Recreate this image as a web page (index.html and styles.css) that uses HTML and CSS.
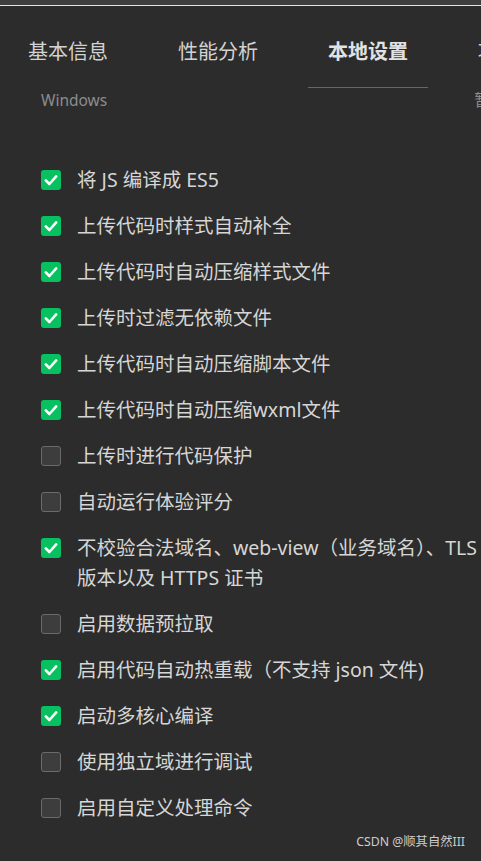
FILE: index.html
```html
<!DOCTYPE html>
<html lang="zh-CN">
<head>
  <meta charset="UTF-8" />
  <meta name="viewport" content="width=device-width, initial-scale=1.0"/>
  <title>详情 - 本地设置</title>
  <link rel="stylesheet" href="styles.css">
</head>
<body>
  <div class="topbar"></div>

  <div class="tabs">
    <div class="tab">基本信息</div>
    <div class="tab">性能分析</div>
    <div class="tab active">本地设置</div>
    <div class="tab">项目配置</div>
  </div>

  <div class="subrow">
    <span class="sub">Windows</span>
    <span class="sub sub-right">暂无</span>
  </div>

  <ul class="options">
    <li class="option"><span class="box checked"></span><span class="label">将 JS 编译成 ES5</span></li>
    <li class="option"><span class="box checked"></span><span class="label">上传代码时样式自动补全</span></li>
    <li class="option"><span class="box checked"></span><span class="label">上传代码时自动压缩样式文件</span></li>
    <li class="option"><span class="box checked"></span><span class="label">上传时过滤无依赖文件</span></li>
    <li class="option"><span class="box checked"></span><span class="label">上传代码时自动压缩脚本文件</span></li>
    <li class="option"><span class="box checked"></span><span class="label">上传代码时自动压缩wxml文件</span></li>
    <li class="option"><span class="box"></span><span class="label">上传时进行代码保护</span></li>
    <li class="option"><span class="box"></span><span class="label">自动运行体验评分</span></li>
    <li class="option"><span class="box checked"></span><span class="label">不校验合法域名、web-view（业务域名）、TLS<br>版本以及 HTTPS 证书</span></li>
    <li class="option"><span class="box"></span><span class="label">启用数据预拉取</span></li>
    <li class="option"><span class="box checked"></span><span class="label">启用代码自动热重载（不支持 json 文件)</span></li>
    <li class="option"><span class="box checked"></span><span class="label">启动多核心编译</span></li>
    <li class="option"><span class="box"></span><span class="label">使用独立域进行调试</span></li>
    <li class="option"><span class="box"></span><span class="label">启用自定义处理命令</span></li>
  </ul>

  <div class="watermark">CSDN @顺其自然III</div>

  <script>
    // draw the tick inside every checked box
    document.querySelectorAll(".box.checked").forEach(function (box) {
      box.innerHTML =
        '<svg width="20" height="20" viewBox="0 0 20 20">' +
        '<polyline points="4.8,10.4 8.4,14 15.2,6.4" fill="none" stroke="#fff" stroke-width="2.6" stroke-linecap="round" stroke-linejoin="round"/>' +
        '</svg>';
    });
  </script>
</body>
</html>
```

FILE: styles.css
```css
body {
  margin: 0;
  padding: 0;
  background-color: #2c2c2c;
  color: #d6d6d6;
  font-family: "Noto Sans", "Noto Sans CJK SC", sans-serif;
  overflow: hidden;
  height: 861px;
}

.topbar {
  height: 5px;
  background-color: #3e3e3e;
  border-bottom: 1px solid #e4e4e4;
}

.tabs {
  display: flex;
  gap: 30px;
  padding-left: 8px;
  white-space: nowrap;
}

.tab {
  flex: 0 0 120px;
  height: 81px;
  padding-top: 32px;
  box-sizing: border-box;
  line-height: 28px;
  font-size: 20px;
  text-align: center;
  color: #d2d2d2;
}

.tab.active {
  height: 82px;
  font-weight: bold;
  color: #e2e2e2;
  border-bottom: 1px solid #666;
}

.subrow {
  display: flex;
  padding-left: 41px;
  height: 24px;
  line-height: 24px;
  white-space: nowrap;
}

.sub {
  font-size: 15.5px;
  color: #8c8c8c;
}

.sub-right {
  margin-left: 367px;
}

.options {
  list-style: none;
  margin: 45px 0 0 0;
  padding: 0;
}

.option {
  display: flex;
  align-items: flex-start;
  gap: 16px;
  padding: 8px 0 8px 41px;
  white-space: nowrap;
}

.box {
  flex: 0 0 auto;
  width: 20px;
  height: 20px;
  margin-top: 5px;
  box-sizing: border-box;
  border: 1px solid #6b6b6b;
  border-radius: 3px;
  background-color: #3d3d3d;
}

.box.checked {
  border: none;
  background-color: #07c160;
}

.box svg {
  display: block;
}

.label {
  font-size: 19.5px;
  line-height: 30px;
  color: #d6d6d6;
}

.watermark {
  text-align: right;
  padding-right: 16px;
  margin-top: 1px;
  font-size: 12.3px;
  line-height: 20px;
  color: #cccccc;
}
```
